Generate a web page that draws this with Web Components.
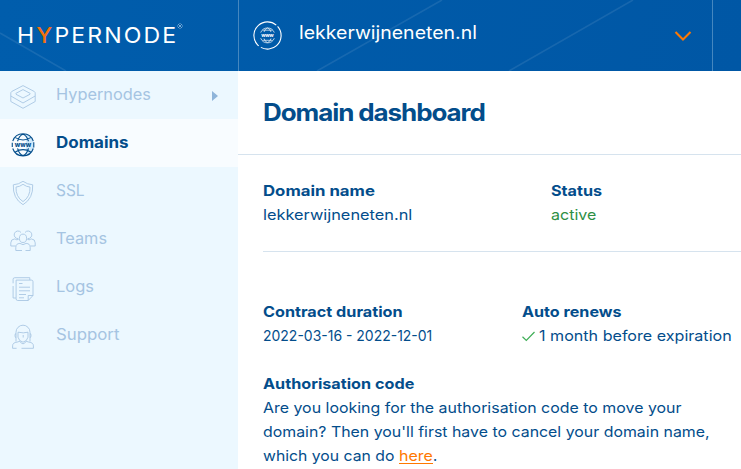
<!DOCTYPE html>
<html lang="en"><head><meta charset="utf-8"><title>Domain dashboard</title>
<style>
body{margin:0;width:741px;height:469px;overflow:hidden;background:#fff;font-family:Inter,"Open Sans",sans-serif;color:#034d8b}
</style></head><body>
<domain-app></domain-app>
<script>
// Text run stretched horizontally to fill the width given in "w"; "ls" sets its letter spacing.
class FitText extends HTMLElement{
  connectedCallback(){
    this.attachShadow({mode:'open'}).innerHTML=`<style>:host{display:inline-block;white-space:pre}span{display:inline-block;transform-origin:0 50%}</style><span><slot></slot></span>`;
    const s=this.shadowRoot.querySelector('span'),w=+this.getAttribute('w');
    s.style.letterSpacing=(this.getAttribute('ls')||0)+'px';
    s.style.transform=`scaleX(${w/s.offsetWidth})`;
    this.style.width=w+'px';
  }
}
const www='<text x="12" y="14.1" text-anchor="middle" font-family="Inter" font-weight="800" font-size="6.6" textLength="17" lengthAdjust="spacingAndGlyphs" fill="currentColor" stroke="none">www</text>';
const icons={
 nodes:'<path d="M12 .6 23.3 6.5q.9.6.9 1.7V11L12 18 -.2 11V8.2q0-1.1.9-1.7Z"/><path d="M12 4.6 19 8.3q.7.5 0 1L12 13 5 9.3q-.7-.5 0-1Z"/><path d="M-.2 11v5.5L12 23.3 24.2 16.5V11"/>',
 globe:'<g transform="translate(.5 .3) scale(.96)"><path d="M15 1h3l5 8v6l-5 7h-3Z" fill="#cfe8fa" stroke="none"/><path d="M1.3 8.2a11.3 11.3 0 0 1 21.4 0M1.3 15.8a11.3 11.3 0 0 0 21.4 0M.8 9.8v4.4M23.2 9.3v5.4M6.3 8.3Q8 2 12 .9q4 1.1 5.7 7.4M6.3 15.7Q8 22 12 23.1q4-1.1 5.7-7.4M4 4.5q8 5 16 0M4 19.5q8-5 16 0" stroke-width="1.15"/>'+www+'</g>',
 shield:'<path d="M12 .3Q16.4 3.5 21.7 3.8 22.4 17.4 12 23.7 1.6 17.4 2.3 3.8 7.6 3.5 12 .3Z"/><path d="M12 3.3Q15.2 5.7 19 6.1 19.4 15.8 12 20.6 4.6 15.8 5 6.1 8.8 5.7 12 3.3Z"/>',
 teams:'<ellipse cx="12" cy="9.3" rx="3.6" ry="4.2"/><path d="M7.2 9.6A3.8 3.8 0 1 1 10 3.5M14 3.5a3.8 3.8 0 1 1 2.8 6.1M4.8 21.5v-3.2q0-3.7 4.1-3.9 3.1 2.5 6.2 0 4.1.2 4.1 3.9v3.2h-4.7M4.8 21.5H11M4.5 17H-.2v-3.2q0-3.7 4-3.9 2.2 1.8 4 .2M19.5 17h4.7v-3.2q0-3.7-4-3.9-2.2 1.8-4 .2"/>',
 logs:'<path d="M5.2 3.1h15.2q1.6 0 1.6 1.6v13.8l-4.8 5H6.7q-1.6 0-1.6-1.6V3.1Z"/><path d="M17.2 23.5v-5H22M18.8 3V.7H3.8Q2.1.7 2.1 2.3v4M2.1 9v12h2.8M8 6.5h3.5M8 10.2h11M8 13.8h11M8 17.5h7M8 20.8h5"/>',
 support:'<path d="M5 16.5V7.2a7 7 0 0 1 14 0v9.3M7 7.2Q12.5 8.5 17 7.2v5q-1 4.2-5 5-4-.8-5-5ZM5 8.3Q4 8.5 4 10.5t1 2.4M19 8.3q1 .2 1 2.2t-1 2.4M1.6 23.3v-2.5q0-3.2 4.5-3.7l2.7-.8q3.2 5 6.4 0l2.7.8q4.5.5 4.5 3.7v2.5H10.5M1.6 23.3h4M12.2 10v2.5"/>'};
class UiIcon extends HTMLElement{
  connectedCallback(){
    this.attachShadow({mode:'open'}).innerHTML=`<style>:host{display:block;width:24px;height:24px}svg{display:block;width:100%;height:100%;overflow:visible}</style><svg viewBox="0 0 24 24" fill="none" stroke="currentColor" stroke-width=".85" stroke-linejoin="round">${icons[this.getAttribute('name')]}</svg>`;
  }
}
class NavItem extends HTMLElement{
  connectedCallback(){
    this.attachShadow({mode:'open'}).innerHTML=`<style>:host{display:flex;box-sizing:border-box;height:48px;padding:0 19px 0 10.5px;align-items:center;color:#a5c4e2;font-size:16px;line-height:24px}
    :host([active]){background:#f8fcff;color:#034d8b;font-weight:700;font-size:15.8px}
    ui-icon{margin:3px 21.5px 0 0}fit-text{margin-top:-2px}:host([active]) fit-text{margin-top:-1px}i{margin-left:auto;width:0;height:0;border:5px solid transparent;border-left:6px solid #8fb5da;border-right:0;margin-top:2px;margin-right:1px}</style>
    <ui-icon name="${this.getAttribute('icon')}"></ui-icon><fit-text w="${this.getAttribute('w')}">${this.getAttribute('label')}</fit-text>${this.hasAttribute('more')?'<i></i>':''}`;
  }
}
class AppHeader extends HTMLElement{
  connectedCallback(){
    this.attachShadow({mode:'open'}).innerHTML=`<style>
    :host{display:grid;grid-template-columns:238px 475px 1fr;height:71px;color:#fff;background:linear-gradient(100deg,#005dac,#0057a5);position:relative}
    .lines{position:absolute;inset:0}
    .brand,.pick{display:flex;box-sizing:border-box;position:relative}
    .brand{padding:22px 0 0 16.5px}.brand fit-text{font-size:22px;line-height:27px;font-weight:400}b{color:#f3700f;font-weight:500}
    .reg{width:6px;height:6px;margin:1px 0 0 -1px}
    .pick{border:solid #4587bf;border-width:0 1px;align-items:center;padding:0 20px 0 14px}
    .pick fit-text{font-size:18px;line-height:24px;margin:-5px 0 0 17px}
    .globe{width:29px;height:29px;margin-top:-1px;overflow:visible}.chev{width:18px;height:12px;margin:1px 0 0 auto}</style>
    <svg class="lines" width="741" height="71" fill="none" stroke="#fff" stroke-opacity=".09" stroke-width="1.6"><path d="M0 33 66 71M317 71 442 0M509 71 633 0"/></svg>
    <div class="brand"><fit-text w="161.5" ls="2">H<b>Y</b>PERNODE</fit-text><svg class="reg" viewBox="0 0 6 6" stroke="#c4dcf0" stroke-width=".6" fill="none"><path d="M1 1l4 4M5 1 1 5M3 0v1M3 5v1M0 3h1M5 3h1"/></svg></div>
    <div class="pick"><svg class="globe" viewBox="0 0 29 29" fill="none" stroke="#fff"><circle cx="14.5" cy="14.5" r="13.6" stroke-width="1.1" stroke-dasharray="38 2.5 42.5 2.45" transform="rotate(-42 14.5 14.5)"/><g stroke-width=".8" opacity=".85"><path d="M7.7 11.6a7.3 7.3 0 0 1 13.6 0M7.7 17.2a7.3 7.3 0 0 0 13.6 0M11 11q1-3.5 3.5-4 2.5.5 3.5 4M11 17.5q1 3.5 3.5 4 2.5-.5 3.5-4M9.5 9.2h10M9.5 19.3h10"/></g><text x="14.5" y="16.2" text-anchor="middle" font-family="Inter" font-size="5.2" font-weight="700" textLength="12.5" fill="#fff" stroke="none">www</text></svg>
    <fit-text w="177.5">lekkerwijneneten.nl</fit-text><svg class="chev" viewBox="0 0 18 12" fill="none" stroke="#ff7800" stroke-width="2.1"><path d="M1.5 2.1 9 9.6 16.5 2.1"/></svg></div>`;
  }
}
class InfoField extends HTMLElement{
  connectedCallback(){
    this.attachShadow({mode:'open'}).innerHTML=`<style>:host{display:block;font-size:14.6px;line-height:24px}.l{height:24px;font-weight:700}</style>
    <div class="l"><fit-text w="${this.getAttribute('w')}">${this.getAttribute('label')}</fit-text></div><slot></slot>`;
  }
}
class DomainApp extends HTMLElement{
  connectedCallback(){
    this.attachShadow({mode:'open'}).innerHTML=`<style>
    :host{display:grid;grid-template:71px 398px/238px 503px;width:741px;height:469px}
    app-header{grid-column:1/-1}nav{background:#ecf8ff}main{min-width:0;overflow:hidden}
    h1{box-sizing:border-box;height:84px;margin:0;padding:27px 0 0 25px;border-bottom:1px solid #d6e3ee;font-size:24px;line-height:30px;font-weight:700}
    .body{padding-left:25px}.row{display:grid}
    .a{grid-template-columns:288px 1fr;height:96px;box-sizing:border-box;padding-top:24px}
    .b{grid-template-columns:258.5px 1fr;height:72px;margin-top:48px}
    .rule{height:1px;background:#d6e3ee}
    .ok{color:#2e8f45}.line{height:24px;display:flex}.line svg{width:13px;height:11px;margin:7px 4px 0 0}
    a{color:#ff7800;height:19px;border-bottom:1px solid}</style>
    <app-header></app-header>
    <nav><nav-item icon="nodes" label="Hypernodes" w="95" more></nav-item><nav-item icon="globe" label="Domains" w="73" active></nav-item><nav-item icon="shield" label="SSL" w="29"></nav-item><nav-item icon="teams" label="Teams" w="51"></nav-item><nav-item icon="logs" label="Logs" w="38"></nav-item><nav-item icon="support" label="Support" w="63"></nav-item></nav>
    <main><h1><fit-text w="222" ls="-1">Domain dashboard</fit-text></h1><div class="body">
    <div class="row a"><info-field label="Domain name" w="111.5"><div class="line"><fit-text w="149">lekkerwijneneten.nl</fit-text></div></info-field><info-field label="Status" w="51"><div class="line ok"><fit-text w="45">active</fit-text></div></info-field></div>
    <div class="rule"></div>
    <div class="row b"><info-field label="Contract duration" w="140"><div class="line"><fit-text w="169.5">2022-03-16 - 2022-12-01</fit-text></div></info-field><info-field label="Auto renews" w="99.5"><div class="line"><svg viewBox="0 0 13 11" fill="none" stroke="#3fae57" stroke-width="1.2"><path d="M.5 5.8 4.3 9.5 12.5 1"/></svg><fit-text w="193">1 month before expiration</fit-text></div></info-field></div>
    <info-field label="Authorisation code" w="151"><div class="line"><fit-text w="419">Are you looking for the authorisation code to move your</fit-text></div><div class="line"><fit-text w="446.5">domain? Then you'll first have to cancel your domain name,</fit-text></div><div class="line"><fit-text w="136">which you can do </fit-text><a><fit-text w="34">here</fit-text></a><span>.</span></div></info-field>
    </div></main>`;
  }
}
customElements.define('fit-text',FitText);
customElements.define('ui-icon',UiIcon);
customElements.define('nav-item',NavItem);
customElements.define('app-header',AppHeader);
customElements.define('info-field',InfoField);
customElements.define('domain-app',DomainApp);
</script></body></html>
